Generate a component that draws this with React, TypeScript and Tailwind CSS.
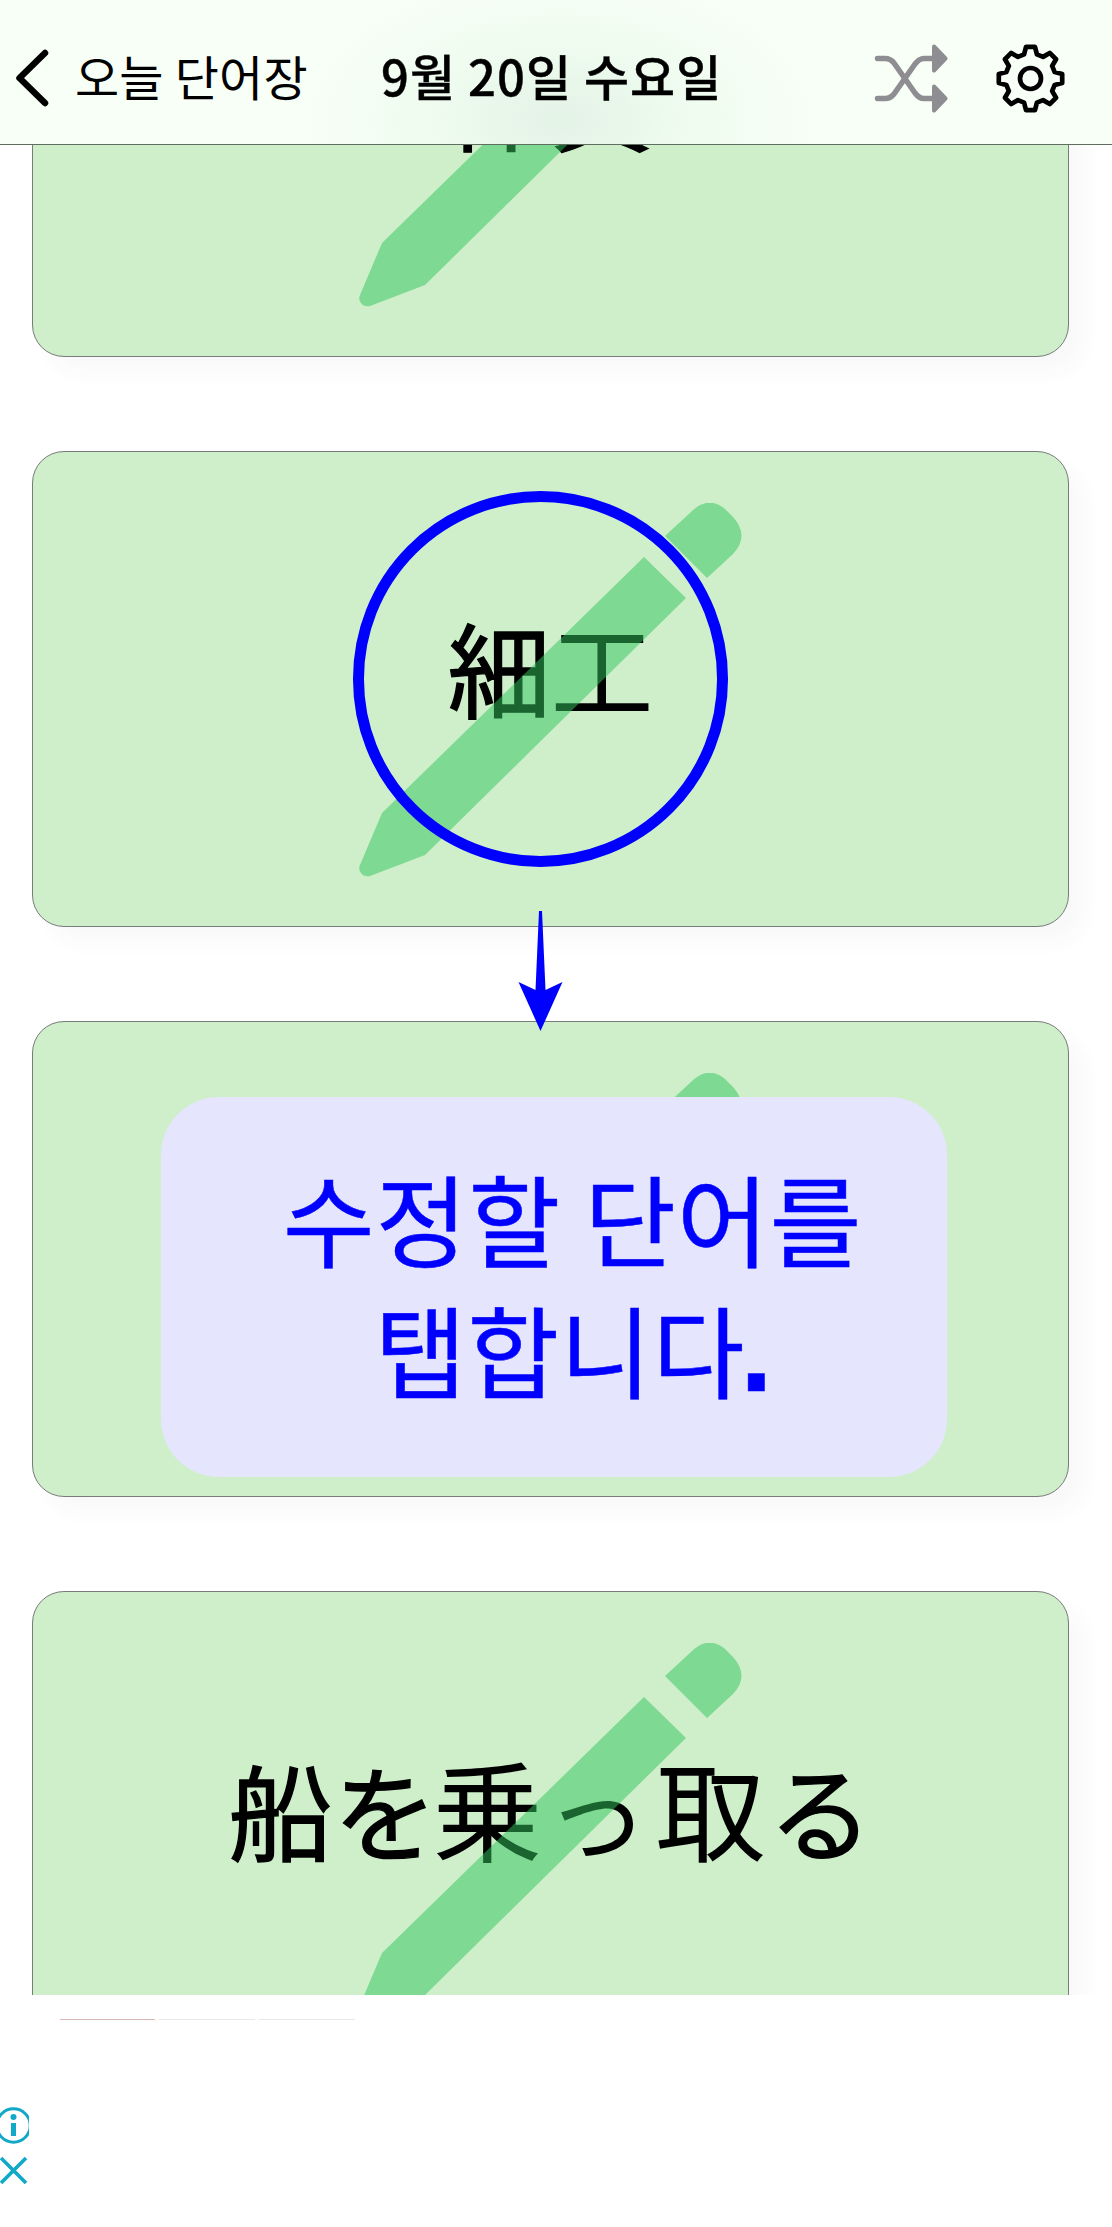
import React from "react";

function Pencil() {
  return (
    <svg className="pointer-events-none absolute left-[326px] top-[51px]" width="386" height="376" viewBox="0 0 386 376">
      <g fill="rgb(50,197,92)" fillOpacity="0.51">
        <path d="M23 310 L285 54 L327 95 L66 352 L11 373 Q5 374 2 370 Q-1 366 1 362 Z" />
        <path d="M306 33 L332 9 Q349 -8 366 6 L374 14 Q391 33 374 51 L348 75 Z" />
      </g>
    </svg>
  );
}

function Card({ children, className = "" }: { children?: React.ReactNode; className?: string }) {
  return (
    <div className="relative flex h-[476px] w-[1037px] shrink-0 items-center justify-center rounded-[32px] border border-[#787c7a] bg-[#ceefca] shadow-[16px_16px_20px_rgba(60,60,80,0.03)]">
      <span className={"whitespace-nowrap font-['Noto_Sans_CJK_JP',sans-serif] leading-none text-black " + className}>{children}</span>
      <Pencil />
    </div>
  );
}

function Heavy({ children }: { children: React.ReactNode }) {
  return <span className="[-webkit-text-stroke:1.3px_#000]">{children}</span>;
}

function Gear() {
  const pts: string[] = [];
  for (let i = 0; i < 8; i++) {
    const a = (i * Math.PI) / 4;
    for (const [r, d] of [[25, -0.26], [32, -0.14], [32, 0.14], [25, 0.26]]) {
      pts.push(`${(35.5 + r * Math.sin(a + d)).toFixed(2)},${(35.5 - r * Math.cos(a + d)).toFixed(2)}`);
    }
  }
  return (
    <svg width="71" height="71" viewBox="0 0 71 71" fill="none" stroke="#000" strokeWidth="4.7" strokeLinejoin="round">
      <polygon points={pts.join(" ")} />
      <circle cx="35.500" cy="35.500" r="10.500" />
    </svg>
  );
}

function Header() {
  return (
    <header className="absolute inset-x-0 top-0 flex h-[145px] items-start border-b border-[#5f6e60] bg-[#f8fff6] bg-[radial-gradient(ellipse_260px_150px_at_560px_120px,#e3f3e6_0%,#f0fcf0_55%,#f8fff6_100%)] font-['Noto_Sans_CJK_KR',sans-serif] text-black">
      <svg className="ml-[14px] mt-[47px] shrink-0" width="38" height="62" viewBox="0 0 38 62" fill="none" stroke="#000" strokeWidth="6.500" strokeLinecap="round" strokeLinejoin="round">
        <path d="M31 6 L5.500 31 L31 56" />
      </svg>
      <span className="ml-[23px] mt-[40px] w-[290px] whitespace-nowrap text-[48px] leading-[70px] tracking-[0.2px]">오늘 단어장</span>
      <span className="ml-[16px] mt-[40px] w-[480px] whitespace-nowrap text-[49px] font-medium leading-[70px] tracking-[1px] [-webkit-text-stroke:0.4px_#000]">9월 20일 수요일</span>
      <svg className="absolute left-[872px] top-[43px]" width="76" height="72" viewBox="0 0 76 72" fill="none" stroke="#8e8d92" strokeWidth="5.500" strokeLinecap="round" strokeLinejoin="round">
        <path d="M5.500 15.500 H13 C18 15.500 20 17.500 22 20 L43 50 C46 54 48 55.500 52 55.500 H60" />
        <path d="M5.500 55.500 H13 C18 55.500 20 53.500 22 51 L43 21 C46 17 48 15.500 52 15.500 H60" />
        <path d="M62 3.500 L73.500 15.500 L62 27.500 Z M62 43.500 L73.500 55.500 L62 67.500 Z" fill="#8e8d92" strokeWidth="4" />
      </svg>
      <div className="absolute left-[995px] top-[43px]"><Gear /></div>
    </header>
  );
}

export default function App() {
  return (
    <div className="relative h-[2227px] w-[1112px] overflow-hidden bg-white">
      <main className="relative h-[1995px] overflow-hidden">
        <div className="-mt-[119px] flex flex-col gap-[94px] pl-8">
          <Card className="pb-[40px] text-[103px]"><Heavy>体質</Heavy></Card>
          <Card className="pb-[45px] text-[103px]"><Heavy>細</Heavy>工</Card>
          <Card />
          <Card className="pb-[47px] text-[104px]">
            <Heavy>船<span className="-mr-[5px] ml-[1px]">を</span></Heavy>
            <span className="text-[110px] tracking-[2px]">乗<span className="mr-[5px] text-[104px]">っ</span>取</span>
            <span className="ml-px"><Heavy>る</Heavy></span>
          </Card>
        </div>
        <div className="absolute left-[353px] top-[491px] h-[376px] w-[375px] rounded-full border-[11px] border-[#0000ff]" />
        <svg className="absolute left-[518px] top-[911px]" width="46" height="121" viewBox="0 0 46 121" fill="#0000ff">
          <path d="M21 0 H24 L27.500 79 L44.500 71 L22.500 120 L0.500 71 L17.500 79 Z" />
        </svg>
        <div className="absolute left-[161px] top-[1097px] h-[380px] w-[786px] rounded-[58px] bg-[#e5e5fe] pl-[37px] pt-[54px] text-center font-['Noto_Sans_CJK_KR',sans-serif] text-[100px] leading-[131px] tracking-[0.7px] text-[#0000ff] [-webkit-text-stroke:0.5px_#0000ff]">
          수정할 단어를
          <br />
          탭합니다<span className="font-['Liberation_Sans',sans-serif] text-[116px] font-bold leading-none tracking-[-2px] -ml-[5px]">.</span>
        </div>
      </main>
      <Header />
      <footer className="pt-[24px]">
        <div className="flex gap-1 pl-[60px]">
          <i className="h-px w-[95px] bg-[#d8b8b0]" />
          <i className="h-px w-[96px] bg-[#e8e8e8]" />
          <i className="h-px w-[96px] bg-[#e8e8e8]" />
        </div>
        <div className="mt-[86px] flex w-[29px] flex-col overflow-hidden">
          <svg className="shrink-0" width="38" height="40" viewBox="0 0 38 40">
            <circle cx="13.500" cy="19.500" r="16.700" fill="none" stroke="#12a9c8" strokeWidth="3" />
            <circle cx="13.500" cy="11" r="3" fill="#12a9c8" />
            <path d="M11 17 H16 V30 H11 Z" fill="#12a9c8" />
          </svg>
          <svg className="mt-[8px] shrink-0" width="29" height="32" viewBox="0 0 29 32" stroke="#12a9c8" strokeWidth="3.700">
            <path d="M1 4 L26 29 M26 4 L1 29" />
          </svg>
        </div>
      </footer>
    </div>
  );
}
